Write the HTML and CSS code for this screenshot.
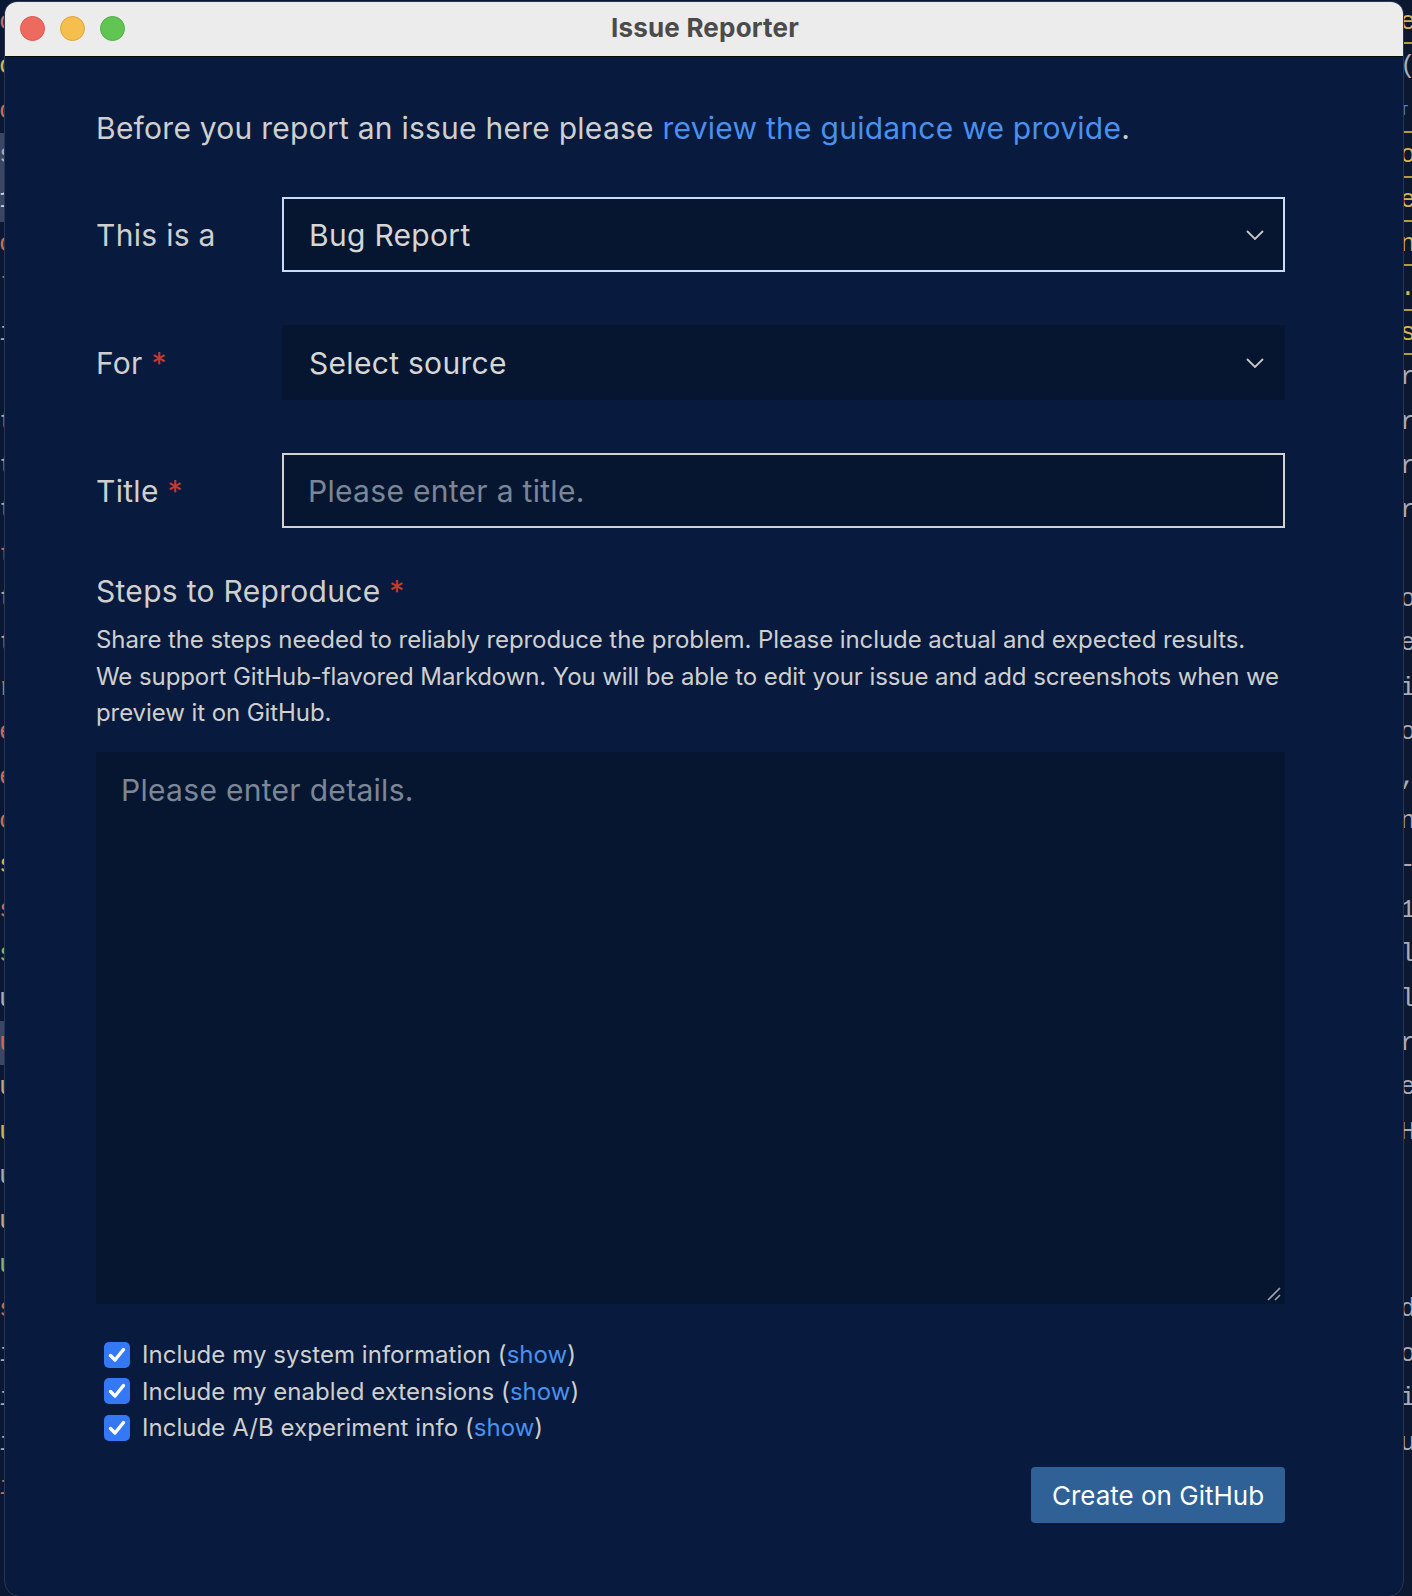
FILE: index.html
```html
<!DOCTYPE html>
<html lang="en">
<head>
<meta charset="utf-8">
<title>Issue Reporter</title>
<link rel="stylesheet" href="styles.css">
</head>
<body>
<div class="desktop">
  <div class="strip strip-left">
    <span class="c-red">o</span><span class="c-yel">o</span><span class="c-red">o</span><span class="c-gry hl">s</span><span class="c-wht hl">1</span><span class="c-red">c</span><span class="c-red">l</span><span class="c-gry">i</span><span class="c-red">|</span><span class="c-gry">t</span><span class="c-gry">t</span><span class="c-gry">t</span><span class="c-red">t</span><span class="c-gry">t</span><span class="c-tan">t</span><span class="c-red">r</span><span class="c-red">e</span><span class="c-red">e</span><span class="c-red">c</span><span class="c-yel">s</span><span class="c-red">s</span><span class="c-grn">s</span><span class="c-gry">u</span><span class="c-red hl">u</span><span class="c-tan">u</span><span class="c-yel">u</span><span class="c-gry">u</span><span class="c-tan">u</span><span class="c-grn">u</span><span class="c-red">s</span><span class="c-gry">i</span><span class="c-gry">i</span><span class="c-gry">i</span><span class="c-red">i</span>
  </div>
  <div class="strip strip-right">
    <span class="c-yel bar">er</span><span class="c-gry">(</span><span class="c-blu small bar">T</span><span class="c-yel bar">o</span><span class="c-yel bar">e</span><span class="c-yel bar">n</span><span class="c-yel bar">.t</span><span class="c-yel bar">s</span><span class="c-gry">r</span><span class="c-gry">r</span><span class="c-gry">r</span><span class="c-gry">r</span><span class="c-gry"> </span><span class="c-gry">o</span><span class="c-gry">e</span><span class="c-gry">i</span><span class="c-gry">o</span><span class="c-gry">,</span><span class="c-gry">n</span><span class="c-gry">-c</span><span class="c-gry">1</span><span class="c-gry">l</span><span class="c-gry">l</span><span class="c-gry">r</span><span class="c-gry">e</span><span class="c-gry">H</span><span class="c-gry"> </span><span class="c-gry"> </span><span class="c-gry"> </span><span class="c-gry">d</span><span class="c-gry">o</span><span class="c-gry">i</span><span class="c-gry">u</span>
  </div>

  <div class="window">
    <div class="titlebar">
      <div class="lights">
        <span class="light red"></span>
        <span class="light yellow"></span>
        <span class="light green"></span>
      </div>
      <div class="title">Issue Reporter</div>
    </div>

    <div class="content">
      <p class="intro">Before you report an issue here please <a class="link" href="#">review the guidance we provide</a>.</p>

      <div class="row">
        <div class="label">This is a</div>
        <div class="field select focused">
          <span class="value">Bug Report</span>
          <svg class="chevron" viewBox="0 0 18 10" width="18" height="10"><path d="M1 1 L9 9 L17 1" fill="none" stroke="#c8c8c8" stroke-width="1.8"/></svg>
        </div>
      </div>

      <div class="row">
        <div class="label">For <span class="req">*</span></div>
        <div class="field select plain">
          <span class="value">Select source</span>
          <svg class="chevron" viewBox="0 0 18 10" width="18" height="10"><path d="M1 1 L9 9 L17 1" fill="none" stroke="#c8c8c8" stroke-width="1.8"/></svg>
        </div>
      </div>

      <div class="row">
        <div class="label">Title <span class="req">*</span></div>
        <input class="field input" type="text" placeholder="Please enter a title.">
      </div>

      <h2 class="section-title">Steps to Reproduce <span class="req">*</span></h2>
      <p class="desc">Share the steps needed to reliably reproduce the problem. Please include actual and expected results.<br>We support GitHub-flavored Markdown. You will be able to edit your issue and add screenshots when we preview it on GitHub.</p>

      <div class="details-wrap">
        <textarea class="details" placeholder="Please enter details."></textarea>
        <svg class="grip" viewBox="0 0 16 16" width="16" height="16"><path d="M2 14 L14 2 M9 14 L14 9" stroke="#a0a4ab" stroke-width="1.6" fill="none"/></svg>
      </div>

      <div class="checks">
        <div class="check"><span class="box"><svg viewBox="0 0 26 26" width="26" height="26"><path d="M6.5 13.5 L11 18 L19.5 7.5" fill="none" stroke="#fff" stroke-width="3.4" stroke-linecap="round" stroke-linejoin="round"/></svg></span><span class="check-text">Include my system information (<a class="link" href="#">show</a>)</span></div>
        <div class="check"><span class="box"><svg viewBox="0 0 26 26" width="26" height="26"><path d="M6.5 13.5 L11 18 L19.5 7.5" fill="none" stroke="#fff" stroke-width="3.4" stroke-linecap="round" stroke-linejoin="round"/></svg></span><span class="check-text">Include my enabled extensions (<a class="link" href="#">show</a>)</span></div>
        <div class="check"><span class="box"><svg viewBox="0 0 26 26" width="26" height="26"><path d="M6.5 13.5 L11 18 L19.5 7.5" fill="none" stroke="#fff" stroke-width="3.4" stroke-linecap="round" stroke-linejoin="round"/></svg></span><span class="check-text">Include A/B experiment info (<a class="link" href="#">show</a>)</span></div>
      </div>

      <div class="actions">
        <button class="primary">Create on GitHub</button>
      </div>
    </div>
  </div>
</div>
</body>
</html>
```

FILE: styles.css
```css
* { box-sizing: border-box; }

html, body {
  margin: 0;
  padding: 0;
  background: #0b1833;
}

.desktop {
  position: relative;
  width: 1412px;
  height: 1596px;
  overflow: hidden;
  display: flex;
  justify-content: space-between;
  background: #0b1833;
  font-family: "Liberation Mono", monospace;
}

.strip {
  display: flex;
  flex-direction: column;
  overflow: hidden;
  font-size: 26px;
}

.strip span {
  display: block;
  height: 44.4px;
  line-height: 44px;
  white-space: pre;
}

.strip-left {
  width: 5px;
  align-items: flex-end;
}
.strip-left span { width: 14px; margin-right: -8px; text-align: right; }

.strip-right {
  width: 10px;
  background: #0c1730;
}
.strip-right span { width: 30px; margin-left: -2px; }
.strip-right .bar { border-bottom: 2px solid #b59a3a; }
.strip-right .small { font-size: 14px; color: #4c86d0; }

.hl { background: #3a4663; }
.c-red { color: #d0685a; }
.c-yel { color: #d6b454; }
.c-gry { color: #a8acb4; }
.c-wht { color: #d8d8d8; }
.c-tan { color: #c7a47a; }
.c-grn { color: #8ab46a; }
.c-blu { color: #4c86d0; }

/* window */
.window {
  position: absolute;
  left: 4px;
  top: 1px;
  width: 1400px;
  height: 1596px;
  border-radius: 13px 13px 16px 16px;
  overflow: hidden;
  background: #081b3e;
  border: 1px solid #2a3550;
  font-family: Inter, "Noto Sans", sans-serif;
}

.titlebar {
  position: relative;
  height: 55px;
  padding-bottom: 3px;
  background: #ececec;
  border-bottom: 1px solid #0a0a0a;
  display: flex;
  align-items: center;
  justify-content: center;
}

.lights {
  position: absolute;
  left: 15px;
  top: 14px;
  display: flex;
  gap: 15px;
}

.light {
  width: 25px;
  height: 25px;
  border-radius: 50%;
  display: block;
}
.light.red { background: #ed6a5e; border: 1px solid #d9574c; }
.light.yellow { background: #f5bf4f; border: 1px solid #dea53a; }
.light.green { background: #61c554; border: 1px solid #4fae43; }

.title {
  font-family: Inter, "Noto Sans", sans-serif;
  font-weight: 700;
  font-size: 26px;
  color: #4b4b4b;
  letter-spacing: 0.2px;
  margin-left: 2px;
}

.content {
  padding: 53px 118px 40px 91px;
  color: #cccccc;
}

.intro {
  margin: 0;
  font-size: 30px;
  letter-spacing: 0.25px;
  line-height: 36px;
  color: #cfcfcf;
}

.link {
  color: #4b90ee;
  text-decoration: none;
}

.req { color: #c83a2a; }

.row {
  display: flex;
  align-items: center;
  margin-top: 51px;
}
.row + .row { margin-top: 53px; }

.label {
  width: 186px;
  flex: none;
  font-size: 30px;
  letter-spacing: 0.3px;
  color: #cfcfcf;
}

.field {
  flex: 1;
  height: 75px;
  background: #061630;
  font-family: Inter, "Noto Sans", sans-serif;
  font-size: 30px;
  letter-spacing: 0.3px;
  color: #d6d6d6;
}

.select {
  display: flex;
  align-items: center;
  justify-content: space-between;
  padding: 0 19px 0 25px;
}
.select.focused { border: 2px solid #c9dcf7; }
.select.plain { border: 2px solid transparent; }

.chevron { display: block; }

.input {
  border: 2px solid #d2d2d2;
  padding: 0 24px;
  outline: none;
  margin: 0;
}
.input::placeholder { color: #7c8696; opacity: 1; }

.section-title {
  margin: 45px 0 0;
  font-size: 30px;
  letter-spacing: 0.3px;
  font-weight: 400;
  line-height: 36px;
  color: #cfcfcf;
}

.desc {
  margin: 13px 0 0;
  font-size: 24px;
  letter-spacing: -0.08px;
  line-height: 36.5px;
  color: #cfcfcf;
}

.details-wrap {
  position: relative;
  margin-top: 20px;
}

.details {
  display: block;
  width: 100%;
  height: 552px;
  margin: 0;
  background: #061630;
  border: none;
  outline: none;
  padding: 20px 25px;
  font-family: Inter, "Noto Sans", sans-serif;
  font-size: 30px;
  letter-spacing: 0.3px;
  color: #d6d6d6;
  resize: none;
}
.details::placeholder { color: #7c8696; opacity: 1; }

.grip {
  position: absolute;
  right: 3px;
  bottom: 2px;
  display: block;
}

.checks {
  margin-top: 33px;
  padding-left: 8px;
}

.check {
  display: flex;
  align-items: center;
  height: 36.5px;
  font-size: 24px;
  letter-spacing: 0.05px;
  color: #cfcfcf;
}

.box {
  width: 26px;
  height: 26px;
  border-radius: 5px;
  background: #3478f6;
  flex: none;
  display: block;
  margin-right: 12px;
}
.box svg { display: block; }

.actions {
  display: flex;
  justify-content: flex-end;
  margin-top: 21px;
}

.primary {
  height: 56px;
  padding: 0;
  background: #2f6096;
  color: #ffffff;
  border: none;
  border-radius: 4px;
  font-family: Inter, "Noto Sans", sans-serif;
  font-size: 26px;
  width: 254px;
}
```
